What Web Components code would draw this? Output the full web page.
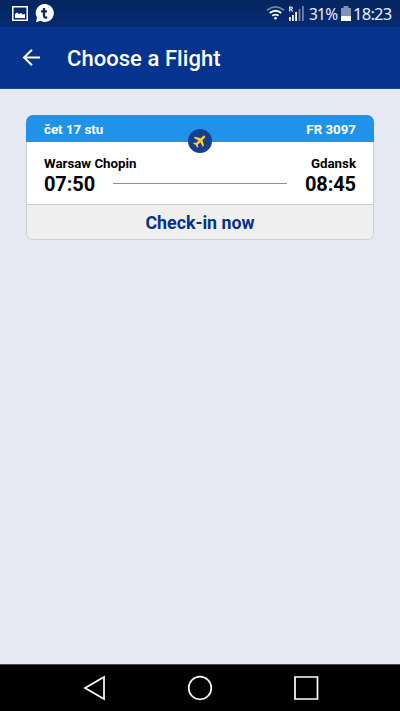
<!DOCTYPE html>
<html lang="en">
<head>
<meta charset="utf-8">
<title>Choose a Flight</title>
<style>
html,body{margin:0;height:100%}
body{background:#e6e9f2;font-family:Roboto,"Noto Sans",sans-serif;overflow:hidden}
</style>
</head>
<body>
<flight-app></flight-app>
<script>
const define = (name, html) => {
  const t = document.createElement('template');
  t.innerHTML = html;
  customElements.define(name, class extends HTMLElement {
    constructor() {
      super();
      this.attachShadow({mode: 'open'}).append(t.content.cloneNode(true));
    }
  });
};

define('status-bar', `
<style>
:host{display:flex;align-items:center;height:27px;box-sizing:border-box;padding:0 9px 0 11px;background:linear-gradient(#04255f,#052b72);color:#e9edf6;font:17px/28px "Noto Sans",sans-serif}
svg{display:block;flex:none}
.talk{margin-left:6px}
.wifi{margin-left:auto}
.signal{margin-left:3px}
.percent{margin-left:4px;width:27px;font-size:15.5px;letter-spacing:-.75px;white-space:nowrap}
.battery{margin-left:5px}
.clock{margin-left:2px;width:38px;font-size:16.5px;letter-spacing:-.75px;white-space:nowrap}
</style>
<svg width="18" height="27" viewBox="0 0 18 27"><path d="M1.800 6.800h14.400v13.400H1.800z" fill="none" stroke="#fff" stroke-width="1.500"/><path d="M4 18v-4l2-1.500 2 1.400 2-1 2 1.500 2-.5V18z" fill="#fff"/></svg>
<svg class="talk" width="19" height="27" viewBox="0 0 19 27"><path d="M9.700 4a9 9 0 1 1-4.400 16.800L1 22.300l1-4.700A9 9 0 0 1 9.700 4z" fill="#fff"/><path d="M9 8v7.600q0 2.600 3.200 1.800M6 11.300h6" fill="none" stroke="#052967" stroke-width="2.300"/></svg>
<svg class="wifi" width="19" height="27" viewBox="0 0 19 27" fill="none" stroke-width="1.800"><path d="M1 10.200q8.500-6.600 17 0" stroke="#7486ab"/><path d="M3.700 13q5.800-4.600 11.600 0M6.400 15.800q3.100-2.400 6.200 0" stroke="#fff"/><circle cx="9.500" cy="18.200" r="1.300" fill="#fff"/></svg>
<svg class="signal" width="17" height="27" viewBox="0 0 17 27"><path d="M1.700 11.500V7h1.300q1.400 0 1.400 1.100T3 9.200H1.700M3 9.200l1.600 2.300" fill="none" stroke="#fff" stroke-width="1.100"/><path d="M1 17h1.800v4H1zM4 15h1.800v6H4zM7.200 12h1.800v9H7.200z" fill="#fff"/><path d="M10.600 9h1.800v12h-1.800zM14 6h1.800v15H14z" fill="#7183aa"/></svg>
<span class="percent">31%</span>
<svg class="battery" width="10" height="27" viewBox="0 0 10 27"><path d="M2.500 6h5v2H10v13H0V8h2.500z" fill="#8292b6"/><path d="M0 16h10v5H0z" fill="#fff"/></svg>
<span class="clock">18:23</span>`);

define('app-header', `
<style>
:host{display:flex;align-items:center;height:62px;box-sizing:border-box;padding-left:22px;background:#05338d;color:#fff;border-bottom:1px solid #1b4391}
svg{display:block;width:19px;height:19px}
h1{margin:2px 0 0 26px;font:500 22px/30px Roboto,sans-serif;letter-spacing:.05px;white-space:nowrap}
</style>
<svg viewBox="0 0 19 19" fill="none" stroke="#fff" stroke-width="2"><path d="M18 9.500H2M10 1.700 2 9.500l8 7.800"/></svg>
<h1><slot></slot></h1>`);

define('plane-badge', `
<style>:host{display:block;width:24px;height:24px}svg{display:block}</style>
<svg width="24" height="24" viewBox="0 0 24 24"><circle cx="12" cy="12" r="12" fill="#163f91"/><path transform="translate(12 11.800) rotate(45) scale(.66) translate(-11.500 -12)" d="M21 15.500v-2.500l-7.600-4.500V3.500a1.900 1.900 0 0 0-3.800 0V8.500L2 13v2.500l7.600-2.200V18.500l-2.600 1.800V22.200l4.500-1 4.500 1v-1.900L13.400 18.500v-5.200z" fill="#fcd02b"/></svg>`);

define('flight-card', `
<style>
:host{display:block;position:relative;height:125px;box-sizing:border-box;color:#000;border-radius:7px;background:#fff;border:1px solid #ccced1;border-top:0;font-family:Roboto,sans-serif}
.top{display:flex;justify-content:space-between;height:27px;margin:0 -1px;padding:0 18px;border-radius:7px 7px 0 0;background:#2092e9;color:#fff;font:700 13.300px/29px Roboto,sans-serif}
.route{display:flex;justify-content:space-between;height:62px;box-sizing:border-box;padding:13px 17px 0;white-space:nowrap}
.city{font:700 13.300px/18px Roboto,sans-serif}
.time{font:700 20px/23px Roboto,sans-serif;letter-spacing:-.1px}
.from{width:51px}
.to{width:51px;display:flex;flex-direction:column;align-items:flex-end}
.line{flex:1;height:1px;margin:28px 18px 0;background:#8c909b}
.action{display:block;height:35px;box-sizing:border-box;border-top:1px solid #d0d0d0;border-radius:0 0 6px 6px;background:#efefef;color:#07318b;text-align:center;font:700 17.800px/36px Roboto,sans-serif}
plane-badge{position:absolute;left:161px;top:14px}
</style>
<div class="top"><slot name="date"></slot><slot name="number"></slot></div>
<div class="route">
<div class="from"><div class="city"><slot name="origin"></slot></div><div class="time"><slot name="departure"></slot></div></div>
<div class="line"></div>
<div class="to"><div class="city"><slot name="destination"></slot></div><div class="time"><slot name="arrival"></slot></div></div>
</div>
<div class="action"><slot name="action"></slot></div>
<plane-badge></plane-badge>`);

define('nav-bar', `
<style>
:host{display:flex;align-items:center;justify-content:space-between;height:47px;box-sizing:border-box;padding:0 81px 0 83px;background:#000;border-top:1px solid #4b4c50}
svg{display:block;fill:none;stroke:#fff;stroke-width:1.700}
</style>
<svg width="24" height="26"><path d="M21 2v22L2 13z"/></svg>
<svg width="26" height="26"><circle cx="13" cy="13" r="11.300"/></svg>
<svg width="26" height="26"><path d="M2 2h22.500v22H2z"/></svg>`);

define('flight-app', `
<style>
:host{display:flex;flex-direction:column;width:400px;height:711px;background:#e6e9f2}
main{flex:1;padding:26px 26px 0}
</style>
<status-bar></status-bar>
<app-header>Choose a Flight</app-header>
<main>
<flight-card>
<span slot="date">čet 17 stu</span><span slot="number">FR 3097</span>
<span slot="origin">Warsaw Chopin</span><span slot="departure">07:50</span>
<span slot="destination">Gdansk</span><span slot="arrival">08:45</span>
<span slot="action">Check-in now</span>
</flight-card>
</main>
<nav-bar></nav-bar>`);
</script>
</body>
</html>
